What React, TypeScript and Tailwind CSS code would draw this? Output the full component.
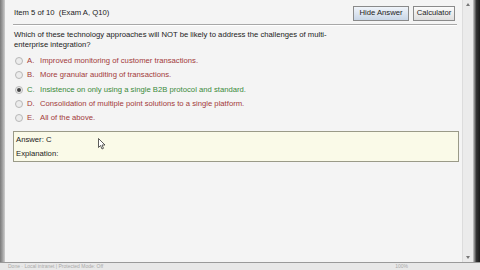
import React from "react";

const opts = [
  { l: "A.", t: "Improved monitoring of customer transactions.", c: "text-[#a33a3a]", sel: false },
  { l: "B.", t: "More granular auditing of transactions.", c: "text-[#a33a3a]", sel: false },
  { l: "C.", t: "Insistence on only using a single B2B protocol and standard.", c: "text-[#3a8a3a]", sel: true },
  { l: "D.", t: "Consolidation of multiple point solutions to a single platform.", c: "text-[#a33a3a]", sel: false },
  { l: "E.", t: "All of the above.", c: "text-[#a33a3a]", sel: false },
];

function Radio({ sel }: { sel: boolean }) {
  return (
    <div className="w-[8px] h-[8px] rounded-full border border-[#b8b8b8] bg-[#ececec] flex items-center justify-center">
      {sel && <div className="w-[4px] h-[4px] rounded-full bg-[#444]" />}
    </div>
  );
}

export default function App() {
  return (
    <div
      className="w-[480px] h-[270px] flex flex-col bg-[#f4f4f4] overflow-hidden text-[#222]"
      style={{ fontFamily: '"Liberation Sans", Arial, sans-serif' }}
    >
      <div className="flex flex-1 min-h-0">
        <div className="w-[5px] bg-gradient-to-r from-[#7a7a7a] via-[#a0a0a0] to-[#cfcfcf]" />
        <div className="flex-1 flex flex-col pl-[8px] pr-[3px] pt-[5px] text-[7.7px] leading-[10px]">
          <div className="flex items-center justify-between h-[17px] pb-[1px]">
            <span className="pl-[1px]">Item 5 of 10&nbsp;&nbsp;(Exam A, Q10)</span>
            <div className="flex gap-[4px] pr-[4px]">
              <div className="h-[15px] w-[56px] border border-[#8a8a8a] bg-gradient-to-b from-[#f0f4fa] to-[#c9d6e6] flex items-center justify-center">
                Hide Answer
              </div>
              <div className="h-[15px] w-[42px] border border-[#8a8a8a] bg-gradient-to-b from-[#fbfbfb] to-[#dedede] flex items-center justify-center">
                Calculator
              </div>
            </div>
          </div>
          <div className="h-[2px] border-t border-[#a8a8a8] border-b border-b-[#ffffff] mt-[2px] mr-[2px]" />
          <div className="mt-[4px] pl-[1px]">
            Which of these technology approaches will NOT be likely to address the challenges of multi-
            <br />
            enterprise integration?
          </div>
          <div className="mt-[4px] flex flex-col">
            {opts.map((o) => (
              <div key={o.l} className="flex items-center h-[14.3px]">
                <div className="w-[14px] pl-[2px]"><Radio sel={o.sel} /></div>
                <span className={`w-[13px] ${o.c}`}>{o.l}</span>
                <span className={o.c}>{o.t}</span>
              </div>
            ))}
          </div>
          <div className="relative mt-[6px] h-[31px] border border-[#9a9a88] bg-[#fafae8] pl-[2px] pt-[3px] flex flex-col gap-[4px]">
            <span>Answer: C</span>
            <span>Explanation:</span>
            <svg className="absolute left-[84px] top-[6px]" width="8" height="12" viewBox="0 0 8 12">
              <path d="M0.5 0.5 L0.5 9.5 L2.5 7.5 L4 11 L5.5 10.3 L4 7 L7 7 Z" fill="#fff" stroke="#333" strokeWidth="0.8" />
            </svg>
          </div>
        </div>
        <div className="w-[11px] bg-[#ebebeb] border-l border-[#dcdcdc] flex flex-col items-center justify-between py-[3px]">
          <div className="w-0 h-0 border-l-[2px] border-r-[2px] border-b-[3px] border-l-transparent border-r-transparent border-b-[#777]" />
          <div className="w-0 h-0 border-l-[2px] border-r-[2px] border-t-[3px] border-l-transparent border-r-transparent border-t-[#777]" />
        </div>
        <div className="w-[7px] bg-gradient-to-r from-[#cfcfcf] via-[#333] to-[#1a1a1a]" />
      </div>
      <div className="h-[8px] border-t border-[#9a9a9a] bg-[#e8e8e8] flex items-center text-[5px] text-[#aaa] px-[8px]">
        <span>Done · Local intranet | Protected Mode: Off</span>
        <span className="ml-auto mr-[64px]">100%</span>
      </div>
    </div>
  );
}
